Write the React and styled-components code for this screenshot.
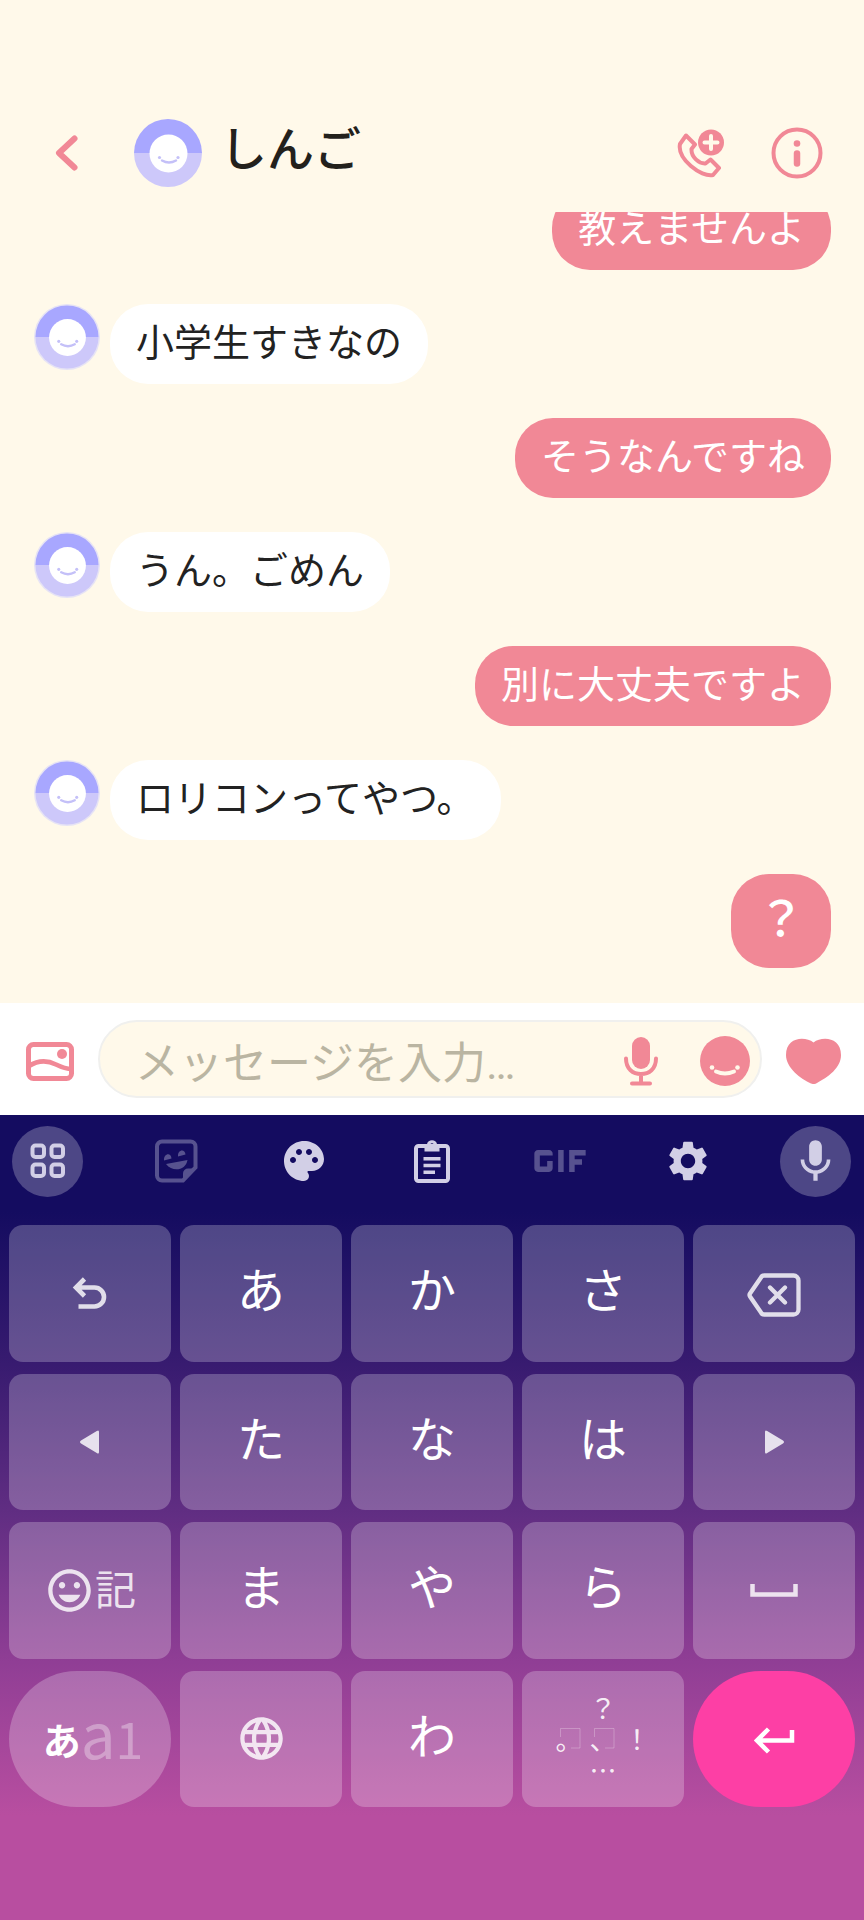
import { useState } from "react";
import styled, { createGlobalStyle } from "styled-components";
import { MdGif, MdLanguage, MdMic, MdMood, MdPalette, MdSettings } from "react-icons/md";

const pink = "#f18896";
const cream = "#fff9ea";

const GlobalStyle = createGlobalStyle`
  * {
    box-sizing: border-box;
  }
  body {
    margin: 0;
    font-family: Roboto, "Noto Sans CJK JP", sans-serif;
  }
`;

const Page = styled.div`
  height: 100vh;
  display: flex;
  flex-direction: column;
  background-color: ${cream};
`;

const IconButton = styled.button`
  flex: none;
  display: flex;
  align-items: center;
  justify-content: center;
  padding: 0;
  border: none;
  background: none;
  color: ${pink};
  cursor: pointer;
`;

const Header = styled.header`
  flex: none;
  display: flex;
  align-items: center;
  height: 212px;
  padding: 94px 41px 0 54px;
`;

const Profile = styled.div`
  flex: 1;
  display: flex;
  align-items: center;
  gap: 18px;
  margin-left: 54px;
`;

const Name = styled.h1`
  margin: 0;
  padding-bottom: 14px;
  font-size: 47px;
  font-weight: 500;
  line-height: 54px;
  font-family: "Noto Sans CJK JP", sans-serif;
  color: #23211c;
`;

const Actions = styled.div`
  display: flex;
  align-items: center;
  gap: 46px;
`;

const Thread = styled.main`
  flex: 1;
  min-height: 0;
  overflow: hidden;
  display: flex;
  flex-direction: column;
  justify-content: flex-end;
  gap: 34px;
  padding: 0 33px 35px 34px;
`;

const Row = styled.div`
  flex: none;
  display: flex;
  align-items: flex-start;
  gap: 10px;
  justify-content: ${(props) => (props.$mine ? "flex-end" : "flex-start")};
`;

const Bubble = styled.p`
  margin: 0;
  padding: ${(props) => (props.$big ? "14px 26px 26px" : "16px 26px 24px")};
  border-radius: 38px;
  font-family: "Noto Sans CJK JP", sans-serif;
  font-size: ${(props) => (props.$big ? "48px" : "38px")};
  font-weight: ${(props) => (props.$big ? 500 : 400)};
  line-height: ${(props) => (props.$big ? "54px" : "40px")};
  background-color: ${(props) => (props.$mine ? pink : "white")};
  color: ${(props) => (props.$mine ? "white" : "#222")};
`;

const Composer = styled.form`
  flex: none;
  display: flex;
  align-items: center;
  gap: 24px;
  padding: 17px 23px 17px 26px;
  background-color: white;
`;

const ComposerButton = styled(IconButton)`
  padding-top: 4px;
`;

const Field = styled.div`
  flex: 1;
  min-width: 0;
  display: flex;
  align-items: center;
  height: 78px;
  padding: 0 10px 0 35px;
  border: 2px solid #f0f0ee;
  border-radius: 39px;
  background-color: ${cream};
`;

const Input = styled.input`
  flex: 1;
  min-width: 0;
  height: 74px;
  padding: 10px 0 0;
  border: none;
  outline: none;
  background: none;
  font-family: inherit;
  font-size: 44px;
  color: #222;

  &::placeholder {
    color: #bab5a2;
    opacity: 1;
  }
`;

const FieldButtons = styled.div`
  display: flex;
  align-items: center;
  gap: 42px;
`;

const Keyboard = styled.section`
  flex: none;
  padding-bottom: 113px;
  background: linear-gradient(
    #140c60 12%,
    #381b70 31%,
    #622e83 50%,
    #903e95 68%,
    #b84ea0 87%
  );
`;

const Tools = styled.div`
  display: flex;
  align-items: center;
  justify-content: space-between;
  height: 110px;
  padding: 0 13px 18px 12px;
`;

const Tool = styled(IconButton)`
  width: 71px;
  height: 71px;
  border-radius: 50%;
  color: ${(props) => (props.$dim ? "#57528f" : "#d2cfe6")};
  background-color: ${(props) => (props.$round ? "#4d4786" : "transparent")};

  svg {
    flex: none;
  }
`;

const Keys = styled.div`
  display: grid;
  grid-template-columns: repeat(5, 1fr);
  grid-template-rows: repeat(4, 1fr);
  gap: 12px 9px;
  height: 582px;
  padding: 0 9px;
`;

const Key = styled.button`
  display: flex;
  align-items: center;
  justify-content: center;
  padding: ${(props) => (props.$kana ? "0 0 12px" : "0")};
  border: none;
  border-radius: ${(props) => (props.$round ? "68px" : "14px")};
  font-family: "Noto Sans CJK JP", sans-serif;
  font-size: 48px;
  line-height: 56px;
  color: ${(props) => (props.$kana || props.$enter ? "white" : "rgba(255, 255, 255, 0.82)")};
  background-color: ${(props) => (props.$enter ? "#fd3fa5" : "rgba(255, 255, 255, 0.24)")};
  cursor: pointer;
`;

const SymbolLabel = styled.span`
  padding-bottom: 6px;
  font-size: 41px;
`;

const Modes = styled.span`
  display: flex;
  align-items: baseline;
  padding-left: 6px;
`;

const Mode = styled.span`
  align-self: ${(props) => (props.$active ? "center" : "baseline")};
  padding-bottom: ${(props) => (props.$active ? "0" : "9px")};
  font-size: ${(props) => props.$size}px;
  font-weight: ${(props) => (props.$active ? 700 : 400)};
  color: ${(props) => (props.$active ? "white" : "rgba(255, 255, 255, 0.32)")};
`;

const Marks = styled.span`
  display: grid;
  grid-template-columns: repeat(3, 34px);
  grid-template-rows: repeat(3, 31px);
  justify-items: center;
  align-items: center;
  font-size: 27px;
  line-height: 31px;
  color: rgba(255, 255, 255, 0.9);
`;

const Mark = styled.span`
  position: relative;
  grid-column: ${(props) => props.$col};
  grid-row: ${(props) => props.$row};
`;

const Ghost = styled.svg`
  position: absolute;
  top: 5px;
  left: 4px;
`;

const Avatar = ({ size, ring }) => (
  <svg width={size} height={size} viewBox="0 0 68 68" style={{ flex: "none" }} aria-hidden="true">
    {ring && <circle cx="34" cy="34" r="34" fill="#e6e3f5" />}
    <path d={ring ? "M1.5 34a32.5 32.5 0 0 1 65 0z" : "M0 34a34 34 0 0 1 68 0z"} fill="#a8a7ff" />
    <path d={ring ? "M1.5 34a32.5 32.5 0 0 0 65 0z" : "M0 34a34 34 0 0 0 68 0z"} fill="#cdc8fa" />
    <circle cx="34.500" cy="34.500" r="19" fill="white" />
    <circle cx="25.500" cy="38.500" r="1.600" fill="#c4c0f8" />
    <circle cx="44" cy="38.500" r="1.600" fill="#c4c0f8" />
    <path d="M28 41.500q7 4 14 0" fill="none" stroke="#c4c0f8" strokeWidth="2.400" strokeLinecap="round" />
  </svg>
);

const BackIcon = () => (
  <svg width="26" height="38" viewBox="0 0 26 38" fill="none" stroke="currentColor" strokeWidth="6" strokeLinecap="round" strokeLinejoin="round">
    <path d="M20.500 4.500L5 19L20.500 33.500" />
  </svg>
);

const CallIcon = () => (
  <svg width="48" height="50" viewBox="0 -1 48 50" fill="none" stroke="currentColor" strokeWidth="4" strokeLinejoin="round">
    <path d="M9 6.500L18 15.500L14.500 20C14 28 22 35 28.500 34.500L33.500 30.500L42 39L36 46C24 48.500 0 30 3 15z" />
    <circle cx="34" cy="13.500" r="13" fill="currentColor" stroke="none" />
    <path d="M34 7v13M27.500 13.500h13" stroke={cream} strokeWidth="4" strokeLinecap="round" />
  </svg>
);

const InfoIcon = () => (
  <svg width="52" height="52" viewBox="0 0 52 52" fill="none" stroke="currentColor">
    <circle cx="26" cy="26" r="23.500" strokeWidth="4" />
    <circle cx="26" cy="16.500" r="3.300" fill="currentColor" stroke="none" />
    <path d="M26 26.500v10" strokeWidth="6.500" strokeLinecap="round" />
  </svg>
);

const PictureIcon = () => (
  <svg width="48" height="39" viewBox="0 0 48 39" fill="none" stroke="currentColor">
    <rect x="2.500" y="2.500" width="43" height="34" rx="5" strokeWidth="5" />
    <circle cx="36" cy="12" r="5" fill="currentColor" stroke="none" />
    <path d="M3 24C14 17 23 19 30 22.500S41 27 46 27" strokeWidth="4.500" />
  </svg>
);

const VoiceIcon = () => (
  <svg width="34" height="50" viewBox="0 0 34 50" fill="none" stroke="currentColor" strokeWidth="4" strokeLinecap="round">
    <rect x="8" y="1" width="18" height="32" rx="9" fill="currentColor" stroke="none" />
    <path d="M2 22.500C2 33 9 38 17 38S32 33 32 22.500M17 38v9M8 47.500h18" />
  </svg>
);

const SmileIcon = () => (
  <svg width="50" height="50" viewBox="0 0 50 50">
    <circle cx="25" cy="25" r="25" fill="currentColor" />
    <circle cx="12" cy="31.500" r="2.300" fill={cream} />
    <circle cx="37.500" cy="31.500" r="2.300" fill={cream} />
    <path d="M16 35.500q9 4 18 0" fill="none" stroke={cream} strokeWidth="4" strokeLinecap="round" />
  </svg>
);

const HeartIcon = () => (
  <svg width="55" height="46" viewBox="0 0 55 46" fill="currentColor">
    <path d="M27.500 4.500C19-2 0-1 0 17C0 30 15 41 25 45.500Q28 46.800 31 45C42 39 55 30 55 17C55-1 36-2 27.500 4.500z" />
  </svg>
);

const GridIcon = () => (
  <svg width="36" height="36" viewBox="0 0 36 36" fill="none" stroke="currentColor" strokeWidth="4">
    <rect x="2.500" y="2.500" width="11.500" height="11.500" rx="3" />
    <rect x="21.500" y="2.500" width="11.500" height="11.500" rx="3" />
    <rect x="2.500" y="21.500" width="11.500" height="11.500" rx="3" />
    <rect x="21.500" y="21.500" width="11.500" height="11.500" rx="3" />
  </svg>
);

const StickerIcon = () => (
  <svg width="44" height="44" viewBox="0 0 44 44" fill="currentColor">
    <path d="M8 2.500H36.500a5 5 0 0 1 5 5V28.500L29 41.500H8a5 5 0 0 1-5-5V7.500a5 5 0 0 1 5-5z" fill="none" stroke="currentColor" strokeWidth="4" />
    <path d="M29 42V34.500a5 5 0 0 1 5-5h8z" />
    <path d="M10 21.500c-.5-7 7-8.500 7.500-2zM24 17.500c-.5-7 7-8 7.500-2zM12 25l21.500-4c-1.500 10-14.500 13-21.500 4z" />
  </svg>
);

const ClipboardIcon = () => (
  <svg width="38" height="44" viewBox="0 0 38 44" fill="none" stroke="currentColor" strokeWidth="4">
    <rect x="3" y="7" width="32" height="35" rx="2.500" />
    <path d="M11.500 12.500V5H14a5.200 5.200 0 0 1 10 0h2.500v7.500zM19 4.300a2 2 0 1 0 .01 0z" fill="currentColor" fillRule="evenodd" stroke="none" />
    <path d="M10.500 19.800h17M10.500 26.500h17M10.500 33.200h11.500" strokeWidth="3.600" />
  </svg>
);

const UndoIcon = () => (
  <svg width="36" height="34" viewBox="0 0 36 34" fill="none" stroke="currentColor" strokeWidth="4.600">
    <path d="M12.500 3L4 11.500L12.500 20M4 11.500H22.500a9.500 9.500 0 0 1 0 19H6.500" />
  </svg>
);

const DeleteIcon = () => (
  <svg width="54" height="48" viewBox="0 -4 54 48" fill="none" stroke="currentColor" strokeWidth="4.300" strokeLinejoin="round" strokeLinecap="round">
    <path d="M17 2.500H46.500a5 5 0 0 1 5 5V36.500a5 5 0 0 1-5 5H17q-2 0-3-2L3 23.500q-1-1.500 0-3L14 4.500q1-2 3-2zM23 14.500l15 15M38 14.500l-15 15" />
  </svg>
);

const ArrowIcon = ({ right }) => (
  <svg width="22" height="26" viewBox="0 0 22 26" fill="currentColor">
    <path d={right ? "M2 3Q2 .5 4.200 2L20 11.500Q22 13 20 14.500L4.200 24Q2 25.500 2 23z" : "M20 3Q20 .5 17.800 2L2 11.500Q0 13 2 14.500L17.800 24Q20 25.500 20 23z"} />
  </svg>
);

const SpaceIcon = () => (
  <svg width="48" height="13" viewBox="0 0 48 13" fill="none" stroke="currentColor" strokeWidth="4.500">
    <path d="M2.500 0V10.500H45.500V0" />
  </svg>
);

const EnterIcon = () => (
  <svg width="42" height="32" viewBox="0 -4 42 32" fill="none" stroke="currentColor" strokeWidth="4.500">
    <path d="M15.500 2L4 13.500L15.500 25M4 13.500H39V3" />
  </svg>
);

const messages = [
  { id: 1, mine: true, text: "教えませんよ" },
  { id: 2, mine: false, text: "小学生すきなの" },
  { id: 3, mine: true, text: "そうなんですね" },
  { id: 4, mine: false, text: "うん。ごめん" },
  { id: 5, mine: true, text: "別に大丈夫ですよ" },
  { id: 6, mine: false, text: "ロリコンってやつ。" },
  { id: 7, mine: true, big: true, text: "？" },
];

const Kana = ({ children }) => (
  <Key type="button" $kana>
    {children}
  </Key>
);

const App = () => {
  const [message, setMessage] = useState("");

  const handleSubmit = (e) => {
    e.preventDefault();
    setMessage("");
  };

  return (
    <Page>
      <GlobalStyle />
      <Header>
        <IconButton type="button" aria-label="戻る">
          <BackIcon />
        </IconButton>
        <Profile>
          <Avatar size={68} />
          <Name>しんご</Name>
        </Profile>
        <Actions>
          <IconButton type="button" aria-label="通話">
            <CallIcon />
          </IconButton>
          <IconButton type="button" aria-label="情報">
            <InfoIcon />
          </IconButton>
        </Actions>
      </Header>

      <Thread>
        {messages.map((item) => (
          <Row key={item.id} $mine={item.mine}>
            {!item.mine && <Avatar size={66} ring />}
            <Bubble $mine={item.mine} $big={item.big}>
              {item.text}
            </Bubble>
          </Row>
        ))}
      </Thread>

      <Composer onSubmit={handleSubmit}>
        <ComposerButton type="button" aria-label="写真">
          <PictureIcon />
        </ComposerButton>
        <Field>
          <Input
            aria-label="メッセージ"
            placeholder="メッセージを入力…"
            value={message}
            onChange={(e) => setMessage(e.target.value)}
          />
          <FieldButtons>
            <ComposerButton type="button" aria-label="音声">
              <VoiceIcon />
            </ComposerButton>
            <ComposerButton type="button" aria-label="スタンプ">
              <SmileIcon />
            </ComposerButton>
          </FieldButtons>
        </Field>
        <ComposerButton type="submit" aria-label="ハート">
          <HeartIcon />
        </ComposerButton>
      </Composer>

      <Keyboard>
        <Tools>
          <Tool type="button" aria-label="メニュー" $round>
            <GridIcon />
          </Tool>
          <Tool type="button" aria-label="ステッカー" $dim>
            <StickerIcon />
          </Tool>
          <Tool type="button" aria-label="テーマ">
            <MdPalette size={48} />
          </Tool>
          <Tool type="button" aria-label="クリップボード">
            <ClipboardIcon />
          </Tool>
          <Tool type="button" aria-label="GIF" $dim>
            <MdGif size={88} />
          </Tool>
          <Tool type="button" aria-label="設定">
            <MdSettings size={48} />
          </Tool>
          <Tool type="button" aria-label="音声入力" $round>
            <MdMic size={51} />
          </Tool>
        </Tools>
        <Keys>
          <Key type="button" aria-label="元に戻す">
            <UndoIcon />
          </Key>
          <Kana>あ</Kana>
          <Kana>か</Kana>
          <Kana>さ</Kana>
          <Key type="button" aria-label="削除">
            <DeleteIcon />
          </Key>

          <Key type="button" aria-label="左">
            <ArrowIcon />
          </Key>
          <Kana>た</Kana>
          <Kana>な</Kana>
          <Kana>は</Kana>
          <Key type="button" aria-label="右">
            <ArrowIcon right />
          </Key>

          <Key type="button">
            <MdMood size={51} />
            <SymbolLabel>記</SymbolLabel>
          </Key>
          <Kana>ま</Kana>
          <Kana>や</Kana>
          <Kana>ら</Kana>
          <Key type="button" aria-label="空白">
            <SpaceIcon />
          </Key>

          <Key type="button" $round>
            <Modes>
              <Mode $size={38} $active>あ</Mode>
              <Mode $size={62}>a</Mode>
              <Mode $size={50}>1</Mode>
            </Modes>
          </Key>
          <Key type="button" aria-label="言語">
            <MdLanguage size={51} />
          </Key>
          <Kana>わ</Kana>
          <Key type="button">
            <Marks>
              <Mark $col={2} $row={1}>？</Mark>
              <Mark $col={1} $row={2}>
                。
                <Ghost width="21" height="21" fill="none" stroke="rgba(255,255,255,0.25)">
                  <path d="M.5 9V.5H20V20H11" />
                </Ghost>
              </Mark>
              <Mark $col={2} $row={2}>
                、
                <Ghost width="21" height="21" fill="none" stroke="rgba(255,255,255,0.25)">
                  <path d="M.5 9V.5H20V20H11" />
                </Ghost>
              </Mark>
              <Mark $col={3} $row={2}>！</Mark>
              <Mark $col={2} $row={3}>…</Mark>
            </Marks>
          </Key>
          <Key type="button" aria-label="改行" $round $enter>
            <EnterIcon />
          </Key>
        </Keys>
      </Keyboard>
    </Page>
  );
};

export default App;
